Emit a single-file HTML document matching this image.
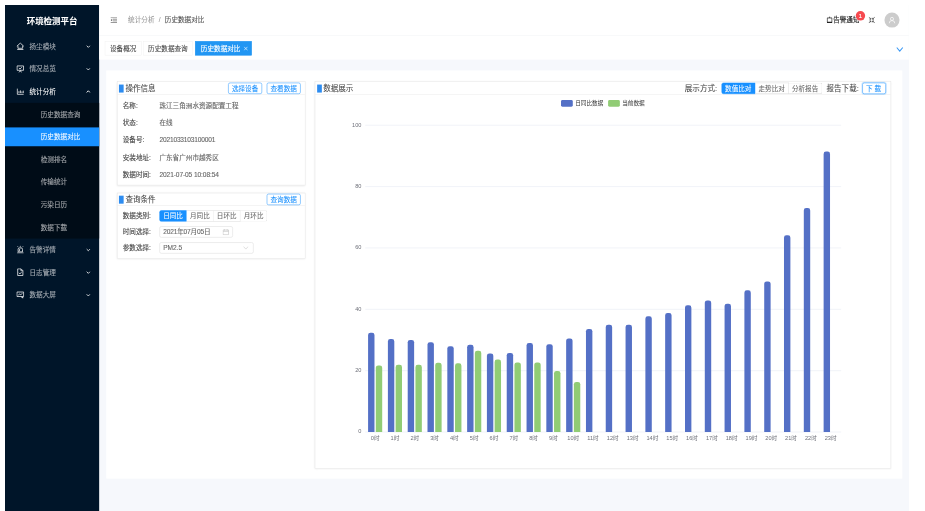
<!DOCTYPE html>
<html lang="zh-CN">
<head>
<meta charset="utf-8">
<title>环境检测平台</title>
<style>
*{box-sizing:border-box}
html,body{margin:0;padding:0;background:#fff}
body{width:925px;height:511px;overflow:hidden;position:relative;font-family:"Liberation Sans","Noto Sans CJK SC",sans-serif}
#app{position:absolute;left:5px;top:5px;width:1920px;height:1076px;transform:scale(0.4708);transform-origin:0 0;filter:blur(0.6px);overflow:hidden;background:#f6f8fc;font-size:14px;color:rgba(0,0,0,.65);line-height:1.5;-webkit-text-stroke:0.25px currentColor}
/* sidebar */
#side{position:absolute;left:0;top:0;width:200px;height:1076px;background:#001529;color:rgba(255,255,255,.62);-webkit-text-stroke:0.12px currentColor}
#logo{height:64px;line-height:70px;text-align:center;color:#fff;font-size:18px;font-weight:bold}
.mi{position:absolute;left:0;width:200px;height:40px;line-height:40px;padding-left:24px;white-space:nowrap}
.mi svg.ic{position:absolute;left:24px;top:11px;width:17px;height:17px;color:rgba(255,255,255,.88);stroke-width:1.7}
.mi span{position:absolute;left:52px}
.mi svg.ar{position:absolute;left:172px;top:15px;width:10px;height:10px;stroke-width:2;color:rgba(255,255,255,.85)}
.mi.open{color:#fff}
#sub{position:absolute;left:0;top:208px;width:200px;height:288px;background:#000c17}
.si{position:absolute;left:0;width:200px;height:40px;line-height:40px;padding-left:76px;white-space:nowrap}
.si.act{background:#1890ff;color:#fff}
/* header */
#head{position:absolute;left:200px;top:0;width:1720px;height:64px;background:#fff}
#bc{position:absolute;left:61.5px;top:21px;line-height:22px;color:rgba(0,0,0,.36);white-space:nowrap}
#bc b{font-weight:normal;color:rgba(0,0,0,.65)}
#bc i{font-style:normal;margin:0 9px}
/* tabs */
#tabs{position:absolute;left:200px;top:64px;width:1720px;height:52px;background:#fff;border-top:1px solid #f2f2f5}
.tab{position:absolute;top:12px;height:30px;line-height:28px;border:1px solid #f0f0f0;padding:0 10px;color:rgba(0,0,0,.68);white-space:nowrap;background:#fff}
.tab.act{background:#2196f3;border-color:#2196f3;color:#fff;padding:0 10px 0 11px}
/* content */
#panel{position:absolute;left:215px;top:139px;width:1690.7px;height:866.7px;background:#fff}
.card{position:absolute;background:#fff;border:1px solid #e4e4e4;box-shadow:0 1px 4px rgba(0,0,0,.1)}
.ch{position:absolute;left:0;top:0;right:0;height:27px;border-bottom:1px solid #e8e8e8}
.ch .bar{position:absolute;left:3px;top:6px;width:10px;height:17px;background:#2d8cf0}
.ch .tt,.ch .hl{position:absolute;left:17px;top:2.5px;font-size:16px;line-height:24px;color:#444;white-space:nowrap;-webkit-text-stroke:0.1px currentColor}
.btn{-webkit-text-stroke:0.12px currentColor;position:absolute;height:24px;line-height:22px;border:1px solid #1890ff;color:#1890ff;border-radius:4px;padding:0 7px;white-space:nowrap;background:#fff}
.lb{position:absolute;left:11px;white-space:nowrap;color:#484848;line-height:22px}
.vl{position:absolute;left:89px;white-space:nowrap;color:#686868;line-height:22px}
.nm{letter-spacing:-0.37px}
.nm2{letter-spacing:-0.2px}
.rg{position:absolute;height:24px;display:flex}
.rg div{height:24px;line-height:22px;border:1px solid #d9d9d9;border-left:0;padding:0 7px;white-space:nowrap;background:#fff;color:rgba(0,0,0,.62);-webkit-text-stroke:0.12px currentColor}
.rg div:first-child{border-left:1px solid #d9d9d9;border-radius:4px 0 0 4px}
.rg div:last-child{border-radius:0 4px 4px 0}
.rg div.on{background:#1890ff;border-color:#1890ff;color:#fff}
.inp{position:absolute;height:24px;line-height:22px;border:1px solid #d9d9d9;border-radius:4px;padding:0 7px;white-space:nowrap;background:#fff;color:rgba(0,0,0,.58)}
#chartsvg{position:absolute;left:0;top:0;width:1920px;height:1076px;font-family:"Liberation Sans","Noto Sans CJK SC",sans-serif}
</style>
</head>
<body>
<div id="app">

<div id="side">
  <div id="logo">环境检测平台</div>
  <div class="mi" style="top:68px">
    <svg class="ic" viewBox="0 0 16 16" fill="none" stroke="currentColor"><path d="M1 8.200L8 1.800l7 6.400M3.300 7v5.200h9.400V7M1.800 14.600h12.400"/></svg>
    <span>扬尘模块</span>
    <svg class="ar" viewBox="0 0 10 10" fill="none" stroke="currentColor"><path d="M1.500 3.500L5 7l3.500-3.500"/></svg>
  </div>
  <div class="mi" style="top:116px">
    <svg class="ic" viewBox="0 0 16 16" fill="none" stroke="currentColor"><path d="M1.500 2.300h13v8.700h-13zM8 11v2M4.800 15l3.200-2.300 3.200 2.300M5.300 6.300l2 2.200 3.700-3.700"/></svg>
    <span>情况总览</span>
    <svg class="ar" viewBox="0 0 10 10" fill="none" stroke="currentColor"><path d="M1.500 3.500L5 7l3.500-3.500"/></svg>
  </div>
  <div class="mi open" style="top:164px">
    <svg class="ic" viewBox="0 0 16 16" fill="none" stroke="currentColor"><path d="M2 2.500V13.800h12.700M5.300 11.300V7.500M8.300 11.300V6M11.300 11.300V8M14 11.300V6.500"/></svg>
    <span>统计分析</span>
    <svg class="ar" viewBox="0 0 10 10" fill="none" stroke="#fff" stroke-width="2.600"><path d="M1.500 6.800L5 3.200l3.500 3.600"/></svg>
  </div>
  <div id="sub">
    <div class="si" style="top:4px">历史数据查询</div>
    <div class="si act" style="top:52px">历史数据对比</div>
    <div class="si" style="top:100px">检测排名</div>
    <div class="si" style="top:148px">传输统计</div>
    <div class="si" style="top:196px">污染日历</div>
    <div class="si" style="top:244px">数据下载</div>
  </div>
  <div class="mi" style="top:500px">
    <svg class="ic" viewBox="0 0 16 16" fill="none" stroke="currentColor"><path d="M3.600 12.500V7.500a3 3 0 0 1 3-3h2.800a3 3 0 0 1 3 3v5zM1.500 14.800h13M8 0.300v2.200M2.600 1.600l1.300 1.500M13.400 1.600l-1.300 1.500"/><path d="M6.200 11V8.500a1.800 1.800 0 0 1 1.800-1.800" stroke-width="1.800"/></svg>
    <span>告警详情</span>
    <svg class="ar" viewBox="0 0 10 10" fill="none" stroke="currentColor"><path d="M1.500 3.500L5 7l3.500-3.500"/></svg>
  </div>
  <div class="mi" style="top:548px">
    <svg class="ic" viewBox="0 0 16 16" fill="none" stroke="currentColor"><path d="M2.800 1.300h6.700L13.200 5v9.700H2.800zM9.300 1.500v3.700H13M5.300 9.300l2 2.200 3.200-3.700"/></svg>
    <span>日志管理</span>
    <svg class="ar" viewBox="0 0 10 10" fill="none" stroke="currentColor"><path d="M1.500 3.500L5 7l3.500-3.500"/></svg>
  </div>
  <div class="mi" style="top:596px">
    <svg class="ic" viewBox="0 0 16 16" fill="none" stroke="currentColor"><path d="M1.300 2.500h13.400v9h-13.400zM4 9.200l2.500-3 2.500 2 3-3.400"/><path d="M10.500 12.500l3.500 2.200" stroke-width="2.200"/></svg>
    <span>数据大屏</span>
    <svg class="ar" viewBox="0 0 10 10" fill="none" stroke="currentColor"><path d="M1.500 3.500L5 7l3.500-3.500"/></svg>
  </div>
</div>

<div id="head">
  <svg style="position:absolute;left:24px;top:26px;width:14px;height:12px" viewBox="0 0 14 12" fill="none" stroke="#555" stroke-width="1.300"><path d="M0 0.800h14M5 4.300h9M5 7.700h9M0 11.200h14"/><path d="M0.300 6l3.200-2.400v4.800z" fill="#555" stroke="none"/></svg>
  <div id="bc">统计分析<i>/</i><b>历史数据对比</b></div>
  <svg style="position:absolute;left:1545px;top:24px;width:13px;height:15px" viewBox="0 0 13 15" fill="none" stroke="#222" stroke-width="1.6"><path d="M1.500 3.500h10v9h-10zM6.500 0.500v3"/><path d="M1 13.200h11" stroke-width="2.400"/></svg>
  <div style="position:absolute;left:1559px;top:21px;line-height:22px;color:#222;white-space:nowrap">告警通知</div>
  <div style="position:absolute;left:1607px;top:13px;width:20px;height:20px;border-radius:10px;background:#f64a4f;color:#fff;font-size:12px;line-height:20px;text-align:center;box-shadow:0 0 0 1px #fff">1</div>
  <svg style="position:absolute;left:1634px;top:25px;width:14px;height:14px" viewBox="0 0 14 14" fill="none" stroke="#333" stroke-width="1.5"><path d="M0.500 0.500l4.500 4.500M2.300 5.200h2.900V2.300M13.500 0.500l-4.500 4.500M11.700 5.200H8.800V2.300M0.500 13.500l4.500-4.500M2.300 8.800h2.900v2.900M13.500 13.500l-4.500-4.500M11.700 8.800H8.800v2.900"/></svg>
  <div style="position:absolute;left:1668px;top:16px;width:32px;height:32px;border-radius:16px;background:#ccc">
    <svg style="position:absolute;left:8px;top:8px;width:16px;height:16px" viewBox="0 0 16 16" fill="none" stroke="#fff" stroke-width="1.5"><circle cx="8" cy="5.500" r="3.300"/><path d="M2 15a6 6 0 0 1 12 0"/></svg>
  </div>
</div>

<div id="tabs">
  <div class="tab" style="left:12px">设备概况</div>
  <div class="tab" style="left:93px">历史数据查询</div>
  <div class="tab act" style="left:204px;width:120px">历史数据对比<svg style="position:absolute;left:102px;top:9.500px;width:9px;height:9px" viewBox="0 0 8 8" stroke="#fff" stroke-width="1.200" fill="none"><path d="M0.300 0.300l7.400 7.400M7.700 0.300l-7.400 7.400"/></svg></div>
  <svg style="position:absolute;left:1693px;top:23.500px;width:15px;height:11px" viewBox="0 0 15 11" fill="none" stroke="#3f9bf5" stroke-width="2.300"><path d="M1 1.300l6.500 7.700L14 1.300"/></svg>
</div>

<div id="panel"></div>

<!-- card 1 -->
<div class="card" style="left:238px;top:162px;width:400px;height:221px">
  <div class="ch"><div class="bar"></div><div class="tt">操作信息</div>
    <div class="btn" style="left:235px;top:2px">选择设备</div>
    <div class="btn" style="left:317px;top:2px">查看数据</div>
  </div>
  <div class="lb" style="top:39px">名称:</div><div class="vl" style="top:39px">珠江三角洲水资源配置工程</div>
  <div class="lb" style="top:76px">状态:</div><div class="vl" style="top:76px">在线</div>
  <div class="lb" style="top:113px">设备号:</div><div class="vl nm" style="top:113px">2021033103100001</div>
  <div class="lb" style="top:150px">安装地址:</div><div class="vl" style="top:150px">广东省广州市越秀区</div>
  <div class="lb" style="top:187px">数据时间:</div><div class="vl nm2" style="top:187px">2021-07-05 10:08:54</div>
</div>

<!-- card 2 -->
<div class="card" style="left:238px;top:398.5px;width:400px;height:140.5px">
  <div class="ch" style="height:26px"><div class="bar" style="top:5px"></div><div class="tt" style="top:1.5px">查询条件</div>
    <div class="btn" style="left:317px;top:1px">查询数据</div>
  </div>
  <div class="lb" style="top:37.5px">数据类别:</div>
  <div class="rg" style="left:89px;top:36.5px"><div class="on">日同比</div><div>月同比</div><div>日环比</div><div>月环比</div></div>
  <div class="lb" style="top:71.5px">时间选择:</div>
  <div class="inp" style="left:89px;top:70.5px;width:156px"><span class="nm">2021年07月05日</span>
    <svg style="position:absolute;right:7px;top:4px;width:14px;height:14px" viewBox="0 0 12 12" fill="none" stroke="#bbb" stroke-width="1"><path d="M1 2.500h10v8.500H1zM1 5h10M3.500 1v2.500M8.500 1v2.500"/></svg>
  </div>
  <div class="lb" style="top:105.5px">参数选择:</div>
  <div class="inp" style="left:89px;top:104.5px;width:200px">PM2.5
    <svg style="position:absolute;right:10px;top:7px;width:11px;height:8px" viewBox="0 0 11 8" fill="none" stroke="#bbb" stroke-width="1"><path d="M0.500 1l5 5.500 5-5.500"/></svg>
  </div>
</div>

<!-- chart card -->
<div class="card" style="left:658px;top:162px;width:1223.5px;height:822.5px">
  <div class="ch"><div class="bar" style="left:4px"></div><div class="tt">数据展示</div>
    <div class="hl" style="left:785px">展示方式:</div>
    <div class="rg" style="left:862.5px;top:2px"><div class="on">数值比对</div><div>走势比对</div><div>分析报告</div></div>
    <div class="hl" style="left:1086px">报告下载:</div>
    <div class="btn" style="left:1162px;top:2px;width:50px;box-shadow:0 0 0 2px rgba(24,144,255,.2)">下 载</div>
  </div>
</div>

<svg id="chartsvg" viewBox="0 0 1920 1076">
<line x1="765.2" x2="1776.0" y1="907.0" y2="907.0" stroke="#e0e6f1" stroke-width="1"/>
<text x="757.2" y="910.0" text-anchor="end" font-size="12" fill="#6e7079">0</text>
<line x1="765.2" x2="1776.0" y1="776.7" y2="776.7" stroke="#e0e6f1" stroke-width="1"/>
<text x="757.2" y="779.7" text-anchor="end" font-size="12" fill="#6e7079">20</text>
<line x1="765.2" x2="1776.0" y1="646.4" y2="646.4" stroke="#e0e6f1" stroke-width="1"/>
<text x="757.2" y="649.4" text-anchor="end" font-size="12" fill="#6e7079">40</text>
<line x1="765.2" x2="1776.0" y1="516.0" y2="516.0" stroke="#e0e6f1" stroke-width="1"/>
<text x="757.2" y="519.0" text-anchor="end" font-size="12" fill="#6e7079">60</text>
<line x1="765.2" x2="1776.0" y1="385.7" y2="385.7" stroke="#e0e6f1" stroke-width="1"/>
<text x="757.2" y="388.7" text-anchor="end" font-size="12" fill="#6e7079">80</text>
<line x1="765.2" x2="1776.0" y1="255.4" y2="255.4" stroke="#e0e6f1" stroke-width="1"/>
<text x="757.2" y="258.4" text-anchor="end" font-size="12" fill="#6e7079">100</text>
<path d="M771.2 907.0V700.9a5 5 0 0 1 5 -5h3.6a5 5 0 0 1 5 5V907.0z" fill="#5470c6"/>
<path d="M787.6 907.0V770.6a5 5 0 0 1 5 -5h3.6a5 5 0 0 1 5 5V907.0z" fill="#91cc75"/>
<text x="786.2" y="923.0" text-anchor="middle" font-size="12" fill="#6e7079">0时</text>
<path d="M813.3 907.0V714.6a5 5 0 0 1 5 -5h3.6a5 5 0 0 1 5 5V907.0z" fill="#5470c6"/>
<path d="M829.7 907.0V769.3a5 5 0 0 1 5 -5h3.6a5 5 0 0 1 5 5V907.0z" fill="#91cc75"/>
<text x="828.3" y="923.0" text-anchor="middle" font-size="12" fill="#6e7079">1时</text>
<path d="M855.4 907.0V716.5a5 5 0 0 1 5 -5h3.6a5 5 0 0 1 5 5V907.0z" fill="#5470c6"/>
<path d="M871.8 907.0V769.3a5 5 0 0 1 5 -5h3.6a5 5 0 0 1 5 5V907.0z" fill="#91cc75"/>
<text x="870.4" y="923.0" text-anchor="middle" font-size="12" fill="#6e7079">2时</text>
<path d="M897.4 907.0V721.1a5 5 0 0 1 5 -5h3.6a5 5 0 0 1 5 5V907.0z" fill="#5470c6"/>
<path d="M913.8 907.0V764.7a5 5 0 0 1 5 -5h3.6a5 5 0 0 1 5 5V907.0z" fill="#91cc75"/>
<text x="912.4" y="923.0" text-anchor="middle" font-size="12" fill="#6e7079">3时</text>
<path d="M939.5 907.0V729.6a5 5 0 0 1 5 -5h3.6a5 5 0 0 1 5 5V907.0z" fill="#5470c6"/>
<path d="M955.9 907.0V766.0a5 5 0 0 1 5 -5h3.6a5 5 0 0 1 5 5V907.0z" fill="#91cc75"/>
<text x="954.5" y="923.0" text-anchor="middle" font-size="12" fill="#6e7079">4时</text>
<path d="M981.6 907.0V726.9a5 5 0 0 1 5 -5h3.6a5 5 0 0 1 5 5V907.0z" fill="#5470c6"/>
<path d="M998.0 907.0V739.3a5 5 0 0 1 5 -5h3.6a5 5 0 0 1 5 5V907.0z" fill="#91cc75"/>
<text x="996.6" y="923.0" text-anchor="middle" font-size="12" fill="#6e7079">5时</text>
<path d="M1023.6 907.0V745.2a5 5 0 0 1 5 -5h3.6a5 5 0 0 1 5 5V907.0z" fill="#5470c6"/>
<path d="M1040.0 907.0V758.2a5 5 0 0 1 5 -5h3.6a5 5 0 0 1 5 5V907.0z" fill="#91cc75"/>
<text x="1038.6" y="923.0" text-anchor="middle" font-size="12" fill="#6e7079">6时</text>
<path d="M1065.7 907.0V744.2a5 5 0 0 1 5 -5h3.6a5 5 0 0 1 5 5V907.0z" fill="#5470c6"/>
<path d="M1082.1 907.0V764.1a5 5 0 0 1 5 -5h3.6a5 5 0 0 1 5 5V907.0z" fill="#91cc75"/>
<text x="1080.7" y="923.0" text-anchor="middle" font-size="12" fill="#6e7079">7时</text>
<path d="M1107.8 907.0V723.0a5 5 0 0 1 5 -5h3.6a5 5 0 0 1 5 5V907.0z" fill="#5470c6"/>
<path d="M1124.2 907.0V764.1a5 5 0 0 1 5 -5h3.6a5 5 0 0 1 5 5V907.0z" fill="#91cc75"/>
<text x="1122.8" y="923.0" text-anchor="middle" font-size="12" fill="#6e7079">8时</text>
<path d="M1149.8 907.0V725.6a5 5 0 0 1 5 -5h3.6a5 5 0 0 1 5 5V907.0z" fill="#5470c6"/>
<path d="M1166.2 907.0V782.3a5 5 0 0 1 5 -5h3.6a5 5 0 0 1 5 5V907.0z" fill="#91cc75"/>
<text x="1164.8" y="923.0" text-anchor="middle" font-size="12" fill="#6e7079">9时</text>
<path d="M1191.9 907.0V713.3a5 5 0 0 1 5 -5h3.6a5 5 0 0 1 5 5V907.0z" fill="#5470c6"/>
<path d="M1208.3 907.0V805.8a5 5 0 0 1 5 -5h3.6a5 5 0 0 1 5 5V907.0z" fill="#91cc75"/>
<text x="1206.9" y="923.0" text-anchor="middle" font-size="12" fill="#6e7079">10时</text>
<path d="M1234.0 907.0V693.1a5 5 0 0 1 5 -5h3.6a5 5 0 0 1 5 5V907.0z" fill="#5470c6"/>
<text x="1249.0" y="923.0" text-anchor="middle" font-size="12" fill="#6e7079">11时</text>
<path d="M1276.0 907.0V683.9a5 5 0 0 1 5 -5h3.6a5 5 0 0 1 5 5V907.0z" fill="#5470c6"/>
<text x="1291.0" y="923.0" text-anchor="middle" font-size="12" fill="#6e7079">12时</text>
<path d="M1318.1 907.0V683.9a5 5 0 0 1 5 -5h3.6a5 5 0 0 1 5 5V907.0z" fill="#5470c6"/>
<text x="1333.1" y="923.0" text-anchor="middle" font-size="12" fill="#6e7079">13时</text>
<path d="M1360.2 907.0V666.3a5 5 0 0 1 5 -5h3.6a5 5 0 0 1 5 5V907.0z" fill="#5470c6"/>
<text x="1375.2" y="923.0" text-anchor="middle" font-size="12" fill="#6e7079">14时</text>
<path d="M1402.2 907.0V659.2a5 5 0 0 1 5 -5h3.6a5 5 0 0 1 5 5V907.0z" fill="#5470c6"/>
<text x="1417.2" y="923.0" text-anchor="middle" font-size="12" fill="#6e7079">15时</text>
<path d="M1444.3 907.0V642.9a5 5 0 0 1 5 -5h3.6a5 5 0 0 1 5 5V907.0z" fill="#5470c6"/>
<text x="1459.3" y="923.0" text-anchor="middle" font-size="12" fill="#6e7079">16时</text>
<path d="M1486.4 907.0V632.5a5 5 0 0 1 5 -5h3.6a5 5 0 0 1 5 5V907.0z" fill="#5470c6"/>
<text x="1501.4" y="923.0" text-anchor="middle" font-size="12" fill="#6e7079">17时</text>
<path d="M1528.4 907.0V639.6a5 5 0 0 1 5 -5h3.6a5 5 0 0 1 5 5V907.0z" fill="#5470c6"/>
<text x="1543.4" y="923.0" text-anchor="middle" font-size="12" fill="#6e7079">18时</text>
<path d="M1570.5 907.0V611.0a5 5 0 0 1 5 -5h3.6a5 5 0 0 1 5 5V907.0z" fill="#5470c6"/>
<text x="1585.5" y="923.0" text-anchor="middle" font-size="12" fill="#6e7079">19时</text>
<path d="M1612.6 907.0V592.1a5 5 0 0 1 5 -5h3.6a5 5 0 0 1 5 5V907.0z" fill="#5470c6"/>
<text x="1627.6" y="923.0" text-anchor="middle" font-size="12" fill="#6e7079">20时</text>
<path d="M1654.6 907.0V494.3a5 5 0 0 1 5 -5h3.6a5 5 0 0 1 5 5V907.0z" fill="#5470c6"/>
<text x="1669.6" y="923.0" text-anchor="middle" font-size="12" fill="#6e7079">21时</text>
<path d="M1696.7 907.0V436.3a5 5 0 0 1 5 -5h3.6a5 5 0 0 1 5 5V907.0z" fill="#5470c6"/>
<text x="1711.7" y="923.0" text-anchor="middle" font-size="12" fill="#6e7079">22时</text>
<path d="M1738.8 907.0V316.4a5 5 0 0 1 5 -5h3.6a5 5 0 0 1 5 5V907.0z" fill="#5470c6"/>
<text x="1753.8" y="923.0" text-anchor="middle" font-size="12" fill="#6e7079">23时</text>
<rect x="1181" y="202" width="25" height="14" rx="3" fill="#5470c6"/>
<text x="1211" y="213.3" font-size="12" fill="#333">日同比数据</text>
<rect x="1281" y="202" width="25" height="14" rx="3" fill="#91cc75"/>
<text x="1311" y="213.3" font-size="12" fill="#333">当前数据</text>
</svg>

</div>
</body>
</html>
